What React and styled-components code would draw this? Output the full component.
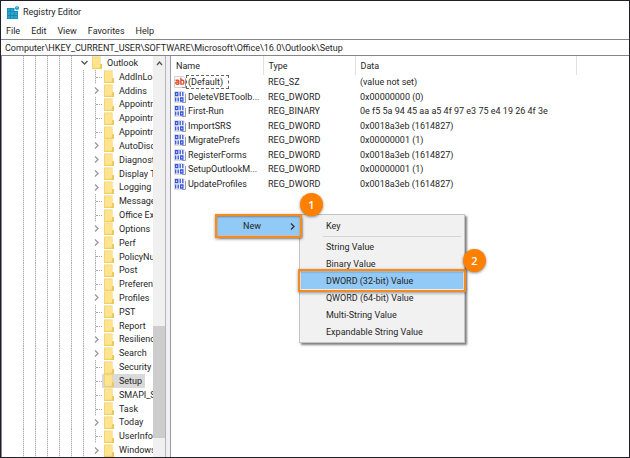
import React from "react";
import styled, { createGlobalStyle, css } from "styled-components";

const GlobalStyle = createGlobalStyle`
  *, *::before, *::after { box-sizing: border-box; }
  body { margin: 0; background: #fff; }
  button, input { font: inherit; color: inherit; margin: 0; padding: 0; border: 0; background: none; }
  ul { list-style: none; margin: 0; padding: 0; }
  svg { flex: none; display: block; }
`;

const Window = styled.main`
  position: relative;
  display: flex;
  flex-direction: column;
  height: 100vh;
  overflow: hidden;
  border: 1px solid #231f26;
  background: #fff;
  color: #262626;
  font: 9px/14px Roboto, "Open Sans", sans-serif;
`;

const TitleBar = styled.header`
  display: flex;
  align-items: center;
  gap: 4px;
  height: 22px;
  padding-left: 6px;
`;

const Title = styled.h1`
  margin: 0;
  font-size: 9px;
  font-weight: 400;
`;

const MenuBar = styled.nav`
  display: flex;
  align-items: center;
  gap: 11px;
  height: 16px;
  padding-left: 5px;
`;

const MenuButton = styled.button`
  line-height: 16px;
`;

const Address = styled.input`
  flex: none;
  width: 100%;
  height: 17px;
  padding: 0 4px;
  border: 1px solid #85858f;
  border-width: 1px 0;
  outline: none;
`;

const Body = styled.div`
  display: flex;
  flex: 1;
  min-height: 0;
`;

const TreePane = styled.div`
  display: flex;
  width: 165px;
  border-left: 1px solid #85858f;
  border-right: 1px solid #b4b4bc;
`;

const Tree = styled.ul`
  display: grid;
  grid-auto-rows: 1fr;
  flex: 1;
  min-width: 0;
  overflow: hidden;
  padding-left: 16px;
`;

const TreeRow = styled.li`
  display: flex;
  align-items: center;
  min-height: 0;
  white-space: nowrap;
`;

const Guide = styled.span`
  flex: none;
  align-self: stretch;
  width: 12px;
  background: repeating-linear-gradient(to bottom, #b0b0b0 0 1px, #e0e0e0 1px 2px) 5px 0 / 1px 100% no-repeat;
`;

const Branch = styled(Guide)`
  position: relative;
  &::after {
    content: "";
    position: absolute;
    left: 6px;
    right: 0;
    top: 50%;
    border-top: 1px dotted #a8a8a8;
  }
`;

const Toggle = styled.button`
  display: flex;
  flex: none;
  align-items: center;
  justify-content: center;
  width: 12px;
  height: 12px;
`;

const Node = styled.span`
  display: flex;
  align-items: center;
  gap: 5px;
  height: 100%;
  padding: 0 3px 0 2px;
  background: ${(p) => (p.$selected ? "#d9d9d9" : "transparent")};
`;

const ScrollBar = styled.div`
  display: flex;
  flex-direction: column;
  flex: none;
  width: 12px;
  background: #f0f0f0;
`;

const ScrollUp = styled.button`
  display: flex;
  justify-content: center;
  padding-top: 4px;
  height: 14px;
`;

const Thumb = styled.div`
  height: 28%;
  margin-top: auto;
  margin-bottom: 19px;
  background: #cdcdcd;
`;

const Splitter = styled.div`
  flex: none;
  width: 5px;
  border-right: 1px solid #9a9aa4;
  background: #f0f0f2;
`;

const ListPane = styled.section`
  flex: 1;
  min-width: 0;
`;

const Values = styled.table`
  width: 100%;
  height: 135px;
  table-layout: fixed;
  border-collapse: collapse;
  white-space: nowrap;
`;

const Column = styled.col`
  width: ${(p) => p.$width};
`;

const HeadCell = styled.th`
  height: 19px;
  padding: 0 0 0 5px;
  border-right: ${(p) => (p.$last ? "0" : "1px solid #e2e2e2")};
  font-weight: 400;
  text-align: left;
`;

const Cell = styled.td`
  padding: 0 0 0 5px;
  line-height: 12px;
`;

const NameCell = styled.div`
  display: flex;
  align-items: center;
  gap: 1px;
  margin-left: -2px;
`;

const ValueName = styled.span`
  padding: 0 1px;
  line-height: 12px;
  ${(p) => p.$focused && css`
    padding-right: 5px;
    outline: 1px dashed #666;
  `}
`;

const Popup = styled.div`
  position: absolute;
  display: flex;
  flex-direction: column;
  border: 1px solid #c4c4c4;
  background: #f1f1f1;
  box-shadow: 2px 2px 2px rgba(0, 0, 0, 0.5);
`;

const ContextMenu = styled(Popup)`
  left: 216px;
  top: 215px;
  width: 83px;
`;

const SubMenu = styled(Popup)`
  left: 298px;
  top: 213px;
  width: 166px;
  padding: 2px 1px;
`;

const Item = styled.button`
  position: relative;
  height: 17px;
  padding-left: 25px;
  text-align: left;
  background: ${(p) => (p.$active ? "#91c9f7" : "transparent")};
  ${(p) => p.$active && css`
    &::after {
      content: "";
      position: absolute;
      inset: -3px;
      border: 2px solid #f58a1f;
      box-shadow: 0 1px 3px rgba(0, 0, 0, 0.4), inset 0 1px 2px rgba(0, 0, 0, 0.35);
    }
  `}
`;

const RootItem = styled(Item)`
  display: flex;
  align-items: center;
  justify-content: space-between;
  height: 18px;
  padding-right: 3px;
`;

const Separator = styled.hr`
  width: 138px;
  margin: 2px 2px 1px auto;
  border: 0;
  border-top: 1px solid #d5d5d5;
`;

const Step = styled.span`
  position: absolute;
  left: ${(p) => p.$x};
  top: ${(p) => p.$y};
  width: 23px;
  height: 23px;
  border-radius: 50%;
  background: #ff7f00;
  box-shadow: 0 1px 3px rgba(0, 0, 0, 0.45);
  color: #fff;
  font: 600 11px/23px "Open Sans", sans-serif;
  text-align: center;
`;

const RegistryIcon = () => (
  <svg width="12" height="13" viewBox="0 0 12 13" aria-hidden="true">
    <path d="M0 2h7.5v3H11v8H0z" fill="#1a86b0" />
    <path d="M.6 2.6h2.3v2.6H.6zM3.9 2.6h2.7v2.6H3.9zM.6 6h2.3v3H.6zM3.9 6h2.7v3H3.9zM7.5 6h2.8v3H7.5zM.6 9.9h2.3v2.5H.6zM3.9 9.9h2.7v2.5H3.9zM7.5 9.9h2.8v2.5H7.5z" fill="#29a6d2" />
    <path d="M10 0l2 1v2l-2 1.3L8 3V1z" fill="#27a5d2" />
    <path d="M9 1.4l1-.5 1 .5-1 .6z" fill="#8fdcf3" />
  </svg>
);

const FolderIcon = () => (
  <svg width="10" height="13" viewBox="0 0 10 13" aria-hidden="true">
    <path d="M0 .5h8.5V8H10v5H0z" fill="#f0cf65" />
    <path d="M.7 1.2h7.5v10.6H.7z" fill="#ffe48f" />
    <path d="M8.2 8.5H10V13H7.5z" fill="#ecc75a" />
  </svg>
);

const Chevron = ({ d, color = "#999" }) => (
  <svg width="7" height="7" viewBox="0 0 7 7" fill="none" stroke={color} strokeWidth="1.3" aria-hidden="true">
    <path d={d} />
  </svg>
);

const RIGHT = "M2 .5l3 3-3 3";
const DOWN = "M.5 2l3 3 3-3";
const UP = "M1 5l2.5-3L6 5";

const TextValueIcon = () => (
  <svg width="12" height="12" viewBox="0 0 12 12" aria-hidden="true">
    <path d="M.5.5h9l2 2v9H.5z" fill="#fafafa" stroke="#d2d2d2" />
    <path d="M11.5 3v8.5H8" fill="none" stroke="#9a9a9a" />
    <g fill="none" stroke="#e04f32" strokeWidth="1.4">
      <path d="M1.6 4.2h2.3q.9 0 .9.9v3.1M4.8 6H2.9q-1.1 0-1.1 1.1t1.1 1.1h1.9" />
      <path d="M6.9 1.8v6.3h1.7q1.2 0 1.2-1.2V5.4q0-1.2-1.2-1.2H6.9" />
    </g>
  </svg>
);

const BinaryValueIcon = () => (
  <svg width="12" height="12" viewBox="0 0 12 12" aria-hidden="true">
    <path d="M.5.5h9l2 2v9H.5z" fill="#f5f6fc" stroke="#dcdce2" />
    <path d="M11.5 3v8.5H8" fill="none" stroke="#9a9aa4" />
    <g fill="none" stroke="#3454dc" strokeWidth="1.3">
      <path d="M1.6 1.6h2.2v3H1.6zM6.2 1v4.2M8.8 1v4.2M1.7 6.4v4.2M4.2 6.4v4.2M6.6 7h2.3v3H6.6z" />
    </g>
  </svg>
);

const children = [
  ["AddInLoadTimes"], ["Addins", true], ["AppointmentCache"], ["AppointmentForms"], ["AppointmentView"],
  ["AutoDiscover", true], ["Diagnostics", true], ["Display Types", true], ["Logging", true], ["Message"],
  ["Office Explorer"], ["Options", true], ["Perf", true], ["PolicyNudges"], ["Post"], ["Preferences"],
  ["Profiles", true], ["PST"], ["Report"], ["Resiliency", true], ["Search", true], ["Security"],
  ["Setup"], ["SMAPI_Store"], ["Task"], ["Today", true], ["UserInfo"], ["Windows", true],
];

const values = [
  ["(Default)", "REG_SZ", "(value not set)"],
  ["DeleteVBEToolb...", "REG_DWORD", "0x00000000 (0)"],
  ["First-Run", "REG_BINARY", "0e f5 5a 94 45 aa a5 4f 97 e3 75 e4 19 26 4f 3e"],
  ["ImportSRS", "REG_DWORD", "0x0018a3eb (1614827)"],
  ["MigratePrefs", "REG_DWORD", "0x00000001 (1)"],
  ["RegisterForms", "REG_DWORD", "0x0018a3eb (1614827)"],
  ["SetupOutlookM...", "REG_DWORD", "0x00000001 (1)"],
  ["UpdateProfiles", "REG_DWORD", "0x0018a3eb (1614827)"],
];

const newItems = [
  "String Value", "Binary Value", "DWORD (32-bit) Value", "QWORD (64-bit) Value",
  "Multi-String Value", "Expandable String Value",
];

const Guides = ({ count }) => Array.from({ length: count }, (_, i) => <Guide key={i} />);

export default function App() {
  return (
    <>
      <GlobalStyle />
      <Window>
        <TitleBar>
          <RegistryIcon />
          <Title>Registry Editor</Title>
        </TitleBar>
        <MenuBar aria-label="Menu bar">
          {["File", "Edit", "View", "Favorites", "Help"].map((m) => <MenuButton key={m}>{m}</MenuButton>)}
        </MenuBar>
        <Address
          aria-label="Address"
          defaultValue={"Computer\\HKEY_CURRENT_USER\\SOFTWARE\\Microsoft\\Office\\16.0\\Outlook\\Setup"}
        />
        <Body>
          <TreePane>
            <Tree role="tree" aria-label="Keys">
              <TreeRow role="treeitem" aria-expanded="true">
                <Guides count={5} />
                <Toggle aria-label="Collapse Outlook"><Chevron d={DOWN} color="#555" /></Toggle>
                <Node><FolderIcon />Outlook</Node>
              </TreeRow>
              {children.map(([name, expandable]) => (
                <TreeRow key={name} role="treeitem" aria-selected={name === "Setup"}>
                  <Guides count={6} />
                  {expandable
                    ? <Toggle aria-label={`Expand ${name}`}><Chevron d={RIGHT} /></Toggle>
                    : <Branch />}
                  <Node $selected={name === "Setup"}><FolderIcon />{name}</Node>
                </TreeRow>
              ))}
            </Tree>
            <ScrollBar>
              <ScrollUp aria-label="Scroll up"><Chevron d={UP} color="#555" /></ScrollUp>
              <Thumb />
            </ScrollBar>
          </TreePane>
          <Splitter />
          <ListPane>
            <Values>
              <colgroup>
                <Column $width="92px" />
                <Column $width="92px" />
                <Column $width="221px" />
                <Column $width="auto" />
              </colgroup>
              <thead>
                <tr>
                  <HeadCell>Name</HeadCell>
                  <HeadCell>Type</HeadCell>
                  <HeadCell>Data</HeadCell>
                  <HeadCell $last />
                </tr>
              </thead>
              <tbody>
                {values.map(([name, type, data], i) => (
                  <tr key={name}>
                    <Cell>
                      <NameCell>
                        {i === 0 ? <TextValueIcon /> : <BinaryValueIcon />}
                        <ValueName $focused={i === 0}>{name}</ValueName>
                      </NameCell>
                    </Cell>
                    <Cell>{type}</Cell>
                    <Cell colSpan={2}>{data}</Cell>
                  </tr>
                ))}
              </tbody>
            </Values>
          </ListPane>
        </Body>
        <SubMenu role="menu" aria-label="New">
          <Item role="menuitem">Key</Item>
          <Separator />
          {newItems.map((label) => (
            <Item key={label} role="menuitem" $active={label.startsWith("DWORD")}>{label}</Item>
          ))}
        </SubMenu>
        <ContextMenu role="menu" aria-label="Context menu">
          <RootItem role="menuitem" $active>
            New
            <Chevron d={RIGHT} color="#333" />
          </RootItem>
        </ContextMenu>
        <Step $x="299px" $y="192px">1</Step>
        <Step $x="462px" $y="248px">2</Step>
      </Window>
    </>
  );
}
